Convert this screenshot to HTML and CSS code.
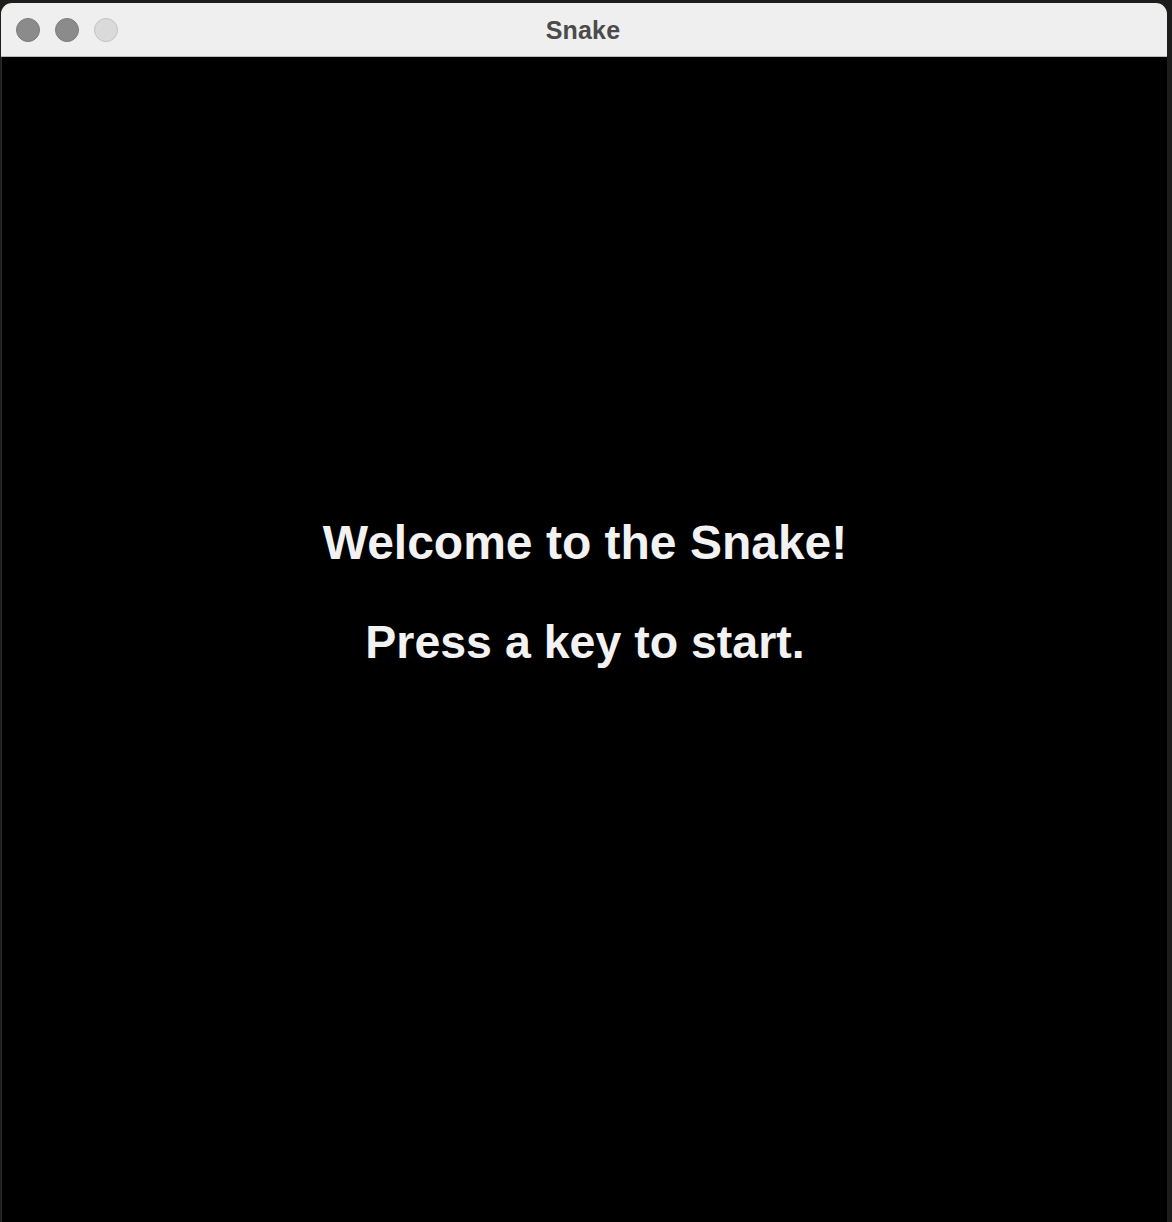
FILE: index.html
```html
<!DOCTYPE html>
<html>
<head>
<meta charset="utf-8">
<title>Snake</title>
<link rel="stylesheet" href="styles.css">
</head>
<body>
<div class="window">
  <div class="titlebar">
    <div class="lights">
      <span class="light light-dim"></span>
      <span class="light light-dim"></span>
      <span class="light light-off"></span>
    </div>
    <div class="title">Snake</div>
  </div>
  <div class="content">
    <div class="line line-1">Welcome to the Snake!</div>
    <div class="line line-2">Press a key to start.</div>
  </div>
</div>
</body>
</html>
```
FILE: styles.css
```css
html, body {
  margin: 0;
  padding: 0;
  height: 100%;
  background: #1d1d1b;
  overflow: hidden;
}

.window {
  margin: 3px 5px 0 1px;
  height: 1230px;
  border-radius: 11px;
  overflow: hidden;
  background: #000;
  display: flex;
  flex-direction: column;
  box-shadow: inset 1px 0 0 #2a2a2a;
}

.titlebar {
  position: relative;
  height: 53px;
  background: #efefef;
  border-bottom: 1px solid #b9b9b9;
  display: flex;
  align-items: center;
  justify-content: center;
  flex: none;
}

.lights {
  position: absolute;
  left: 15px;
  top: 15px;
  display: flex;
  gap: 15px;
}

.light {
  width: 22px;
  height: 22px;
  border-radius: 50%;
  box-sizing: content-box;
}

.light-dim {
  background: #8b8b8b;
  border: 1px solid #7c7c7c;
}

.light-off {
  background: #dadada;
  border: 1px solid #c4c4c4;
}

.title {
  font-family: "Liberation Sans", Arial, sans-serif;
  font-weight: bold;
  font-size: 25px;
  letter-spacing: 0.2px;
  color: #4b4b4b;
  margin-left: -2px;
  margin-top: 1px;
}

.content {
  flex: 1;
  display: flex;
  flex-direction: column;
  align-items: center;
  padding-top: 458px;
  padding-left: 2px;
  font-family: "Liberation Sans", Arial, sans-serif;
  font-weight: bold;
  color: #f2f2f2;
}

.line {
  line-height: 56px;
  white-space: nowrap;
}

.line-1 {
  font-size: 48px;
}

.line-2 {
  font-size: 46.5px;
  margin-top: 43px;
}
```
